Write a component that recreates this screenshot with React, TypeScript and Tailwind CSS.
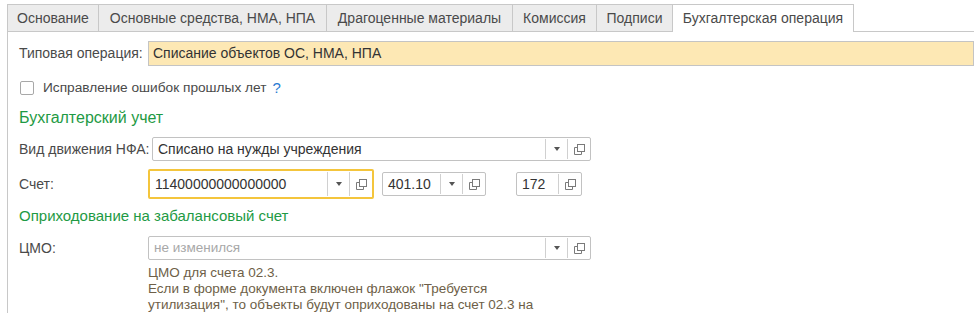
import React from 'react';

const tabs = [
  { label: 'Основание', w: 'w-[92px]' },
  { label: 'Основные средства, НМА, НПА', w: 'w-[228px]' },
  { label: 'Драгоценные материалы', w: 'w-[186px]' },
  { label: 'Комиссия', w: 'w-[84px]' },
  { label: 'Подписи', w: 'w-[76px]' },
];

function OpenIcon() {
  return (
    <svg width="11" height="11" viewBox="0 0 11 11" fill="none" stroke="#7a7a7a" strokeWidth="1">
      <rect x="3.5" y="0.5" width="7" height="7" />
      <path d="M3.5 3.5 H0.5 V10.5 H7.5 V7.5" />
    </svg>
  );
}

function Arrow() {
  return <span className="w-0 h-0 border-l-[3px] border-r-[3px] border-t-[4px] border-l-transparent border-r-transparent border-t-[#555]" />;
}

function Field({
  value,
  w,
  h = 'h-[24px]',
  border = 'border border-[#c2c2c2]',
  dropdown = true,
  placeholder = false,
}: {
  value: string;
  w: string;
  h?: string;
  border?: string;
  dropdown?: boolean;
  placeholder?: boolean;
}) {
  return (
    <div className={`${w} ${h} ${border} rounded-[2px] bg-white flex items-stretch shrink-0`}>
      <div className={`flex-1 flex items-center pl-[5px] ${placeholder ? 'text-[#a8a8a8] text-[13.5px]' : 'text-[#333] text-[14px]'}`}>{value}</div>
      {dropdown && (
        <div className="w-[22px] border-l border-[#d0d0d0] flex items-center justify-center my-[1px]">
          <Arrow />
        </div>
      )}
      <div className="w-[23px] border-l border-[#d0d0d0] flex items-center justify-center my-[1px]">
        <OpenIcon />
      </div>
    </div>
  );
}

export default function App() {
  return (
    <div className="w-[974px] h-[313px] bg-white overflow-hidden text-[14px] text-[#4a4a4a]" style={{ fontFamily: '"Liberation Sans", Arial, sans-serif' }}>
      {/* tabs */}
      <div className="flex pt-[4px] pl-[7px] text-[14px]">
        {tabs.map((t, i) => (
          <div
            key={t.label}
            className={`${t.w} h-[28px] flex items-center justify-center bg-[#ececec] border-t border-b border-r border-[#c8c8c8] ${i === 0 ? 'border-l' : ''}`}
          >
            {t.label}
          </div>
        ))}
        <div className="w-[181px] h-[28px] flex items-center justify-center bg-white border-t border-r border-[#c8c8c8]">
          Бухгалтерская операция
        </div>
        <div className="flex-1 border-b border-[#c8c8c8]" />
      </div>

      {/* panel */}
      <div className="ml-[7px] border-l border-[#c8c8c8] h-[281px] pl-[11px] pt-[9px]">
        <div className="flex items-center h-[25px]">
          <span className="w-[129px] shrink-0">Типовая операция:</span>
          <div className="flex-1 h-[25px] border border-[#c4c4c4] bg-[#fde8b4] flex items-center pl-[4px] text-[14px] text-[#333]">
            Списание объектов ОС, НМА, НПА
          </div>
        </div>

        <div className="flex items-center h-[16px] mt-[14px]">
          <span className="w-[14px] h-[14px] border border-[#a8a8a8] rounded-[2px] bg-white ml-[1px]" />
          <span className="ml-[9px] text-[13.7px]">Исправление ошибок прошлых лет</span>
          <span className="ml-[6px] text-[#2a7bd3] text-[15px]">?</span>
        </div>

        <div className="mt-[13px] text-[16px] text-[#1e9a44] leading-[18px]">Бухгалтерский учет</div>

        <div className="flex items-center mt-[10px]">
          <span className="w-[133px] shrink-0">Вид движения НФА:</span>
          <Field value="Списано на нужды учреждения" w="w-[439px]" dropdown />
        </div>

        <div className="flex items-center mt-[8px]">
          <span className="w-[129px] shrink-0">Счет:</span>
          <Field value="11400000000000000" w="w-[226px]" h="h-[30px]" border="border-2 border-[#f4c53c]" />
          <div className="ml-[8px]">
            <Field value="401.10" w="w-[104px]" />
          </div>
          <div className="ml-[30px]">
            <Field value="172" w="w-[66px]" dropdown={false} />
          </div>
        </div>

        <div className="mt-[8px] text-[15px] text-[#1e9a44] leading-[18px]">Оприходование на забалансовый счет</div>

        <div className="flex items-center mt-[11px]">
          <span className="w-[129px] shrink-0">ЦМО:</span>
          <Field value="не изменился" w="w-[443px]" placeholder />
        </div>

        <div className="ml-[129px] mt-[5px] text-[#6e5f48] leading-[16px] w-[440px] text-[13.5px]">
          ЦМО для счета 02.3.
          <br />
          Если в форме документа включен флажок "Требуется
          <br />
          утилизация", то объекты будут оприходованы на счет 02.3 на
        </div>
      </div>
    </div>
  );
}
